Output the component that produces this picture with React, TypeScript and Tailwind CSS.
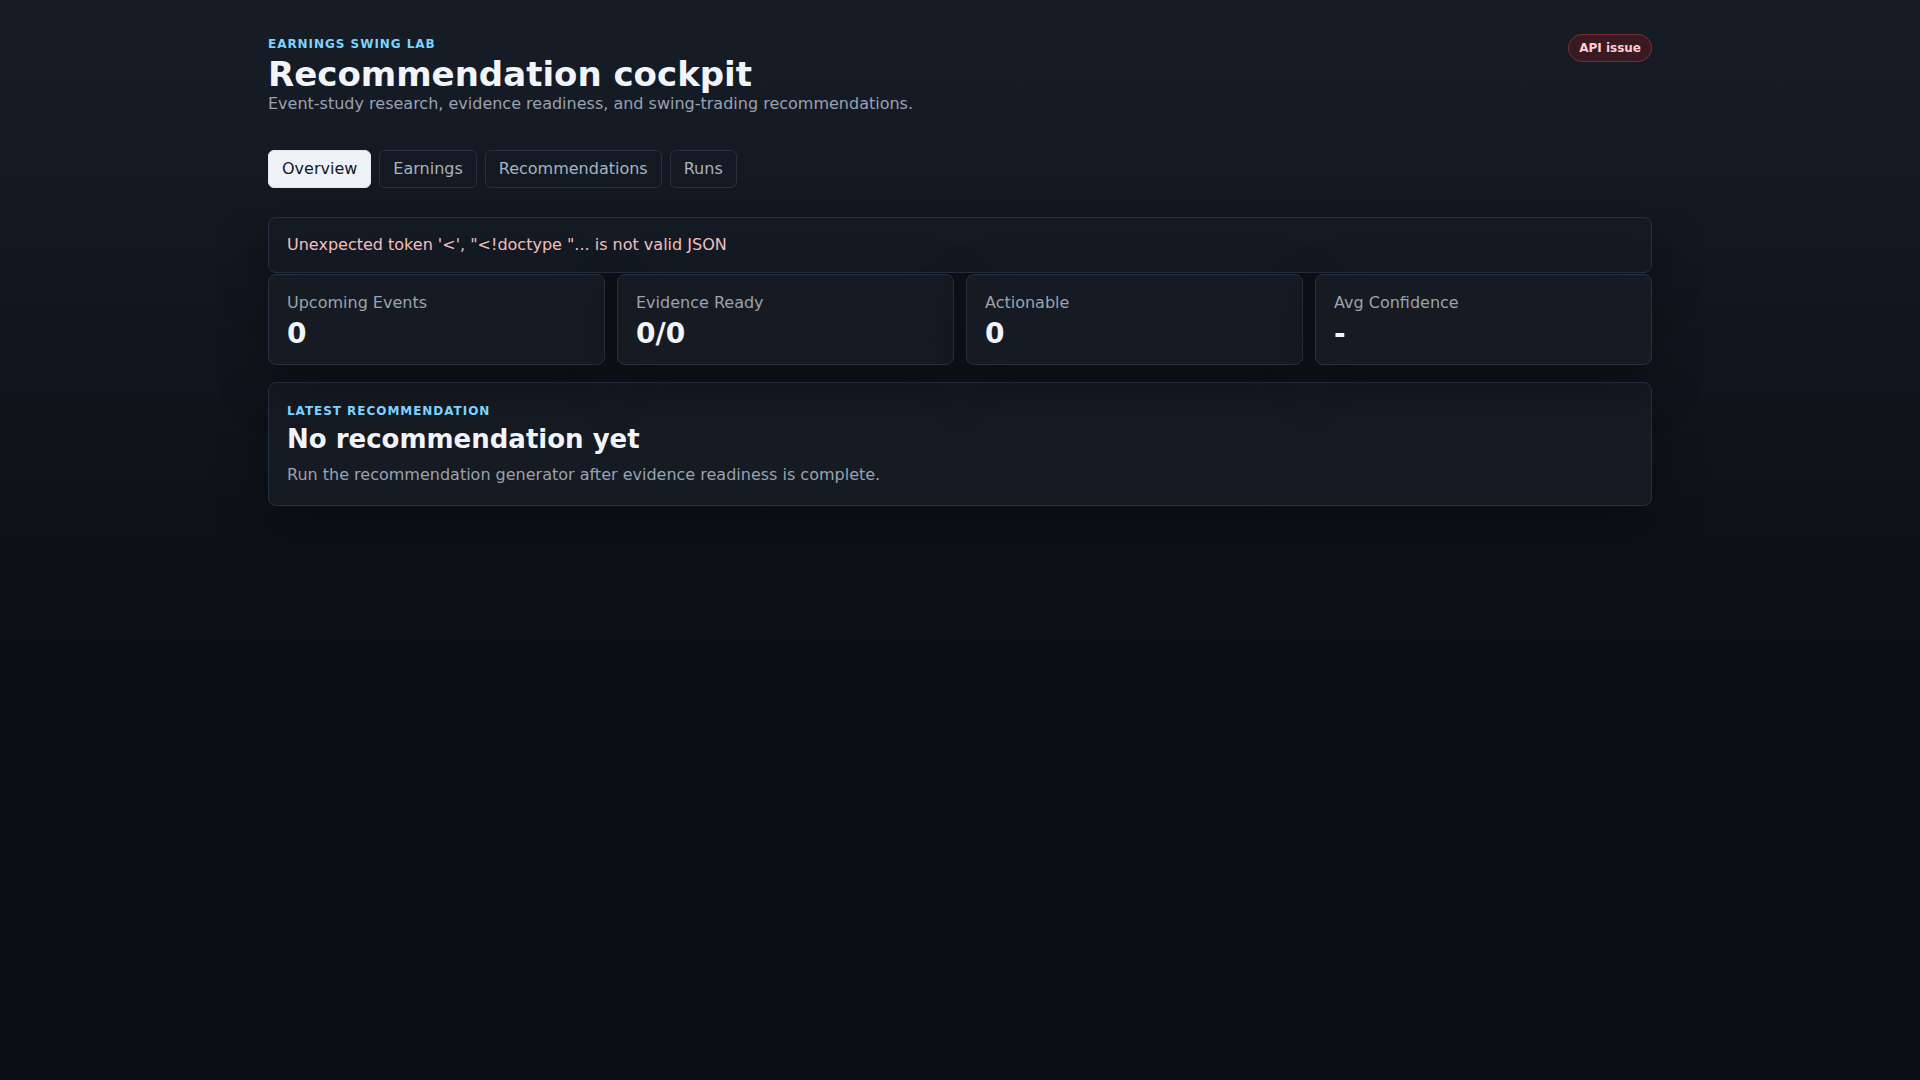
import React from "react";

const tabs = ["Overview", "Earnings", "Recommendations", "Runs"];

const stats = [
  { label: "Upcoming Events", value: "0" },
  { label: "Evidence Ready", value: "0/0" },
  { label: "Actionable", value: "0" },
  { label: "Avg Confidence", value: "-" },
];

export default function App() {
  return (
    <div className="min-h-screen bg-[linear-gradient(180deg,#171d27_0%,#11161e_30%,#0c0f14_60%,#0b0e13_100%)] font-['DejaVu_Sans','Liberation_Sans',sans-serif] text-[#e5e9f0]">
      <div className="mx-auto max-w-[1440px] px-7 pt-8 pb-10">
        <header className="flex items-start justify-between">
          <div>
            <p className="text-[12px] font-bold uppercase leading-6 tracking-[0.08em] text-[#7dd3fc]">
              Earnings Swing Lab
            </p>
            <h1 className="text-[34px] font-bold leading-[36px] text-[#f1f4f8]">
              Recommendation cockpit
            </h1>
            <p className="text-base leading-6 text-[#99a2b0]">
              Event-study research, evidence readiness, and swing-trading recommendations.
            </p>
          </div>
          <span className="mt-0.5 rounded-full border border-[#7b2d37] bg-[#3a1a21] px-2.5 py-[5px] text-xs font-bold leading-4 text-[#fecdd3]">
            API issue
          </span>
        </header>

        <nav className="mt-[34px] flex gap-2">
          {tabs.map((t, i) => (
            <button
              key={t}
              className={
                i === 0
                  ? "rounded-md border border-[#e2e8f0] bg-[#eef2f7] px-[13px] py-[6px] text-base leading-6 text-[#111827]"
                  : "rounded-md border border-[#273142] bg-[#141a23] px-[13px] py-[6px] text-base leading-6 text-[#a9b2bf]"
              }
            >
              {t}
            </button>
          ))}
        </nav>

        <div className="mt-[29px] rounded-lg border border-[#263142] bg-[#141a23] px-[18px] py-[15px] text-base leading-6 text-[#f4c0bd] shadow-[0_18px_50px_rgba(0,0,0,0.35)]">
          Unexpected token '&lt;', "&lt;!doctype "... is not valid JSON
        </div>

        <div className="mt-px grid grid-cols-4 gap-3">
          {stats.map((s) => (
            <div
              key={s.label}
              className="rounded-lg border border-[#263142] bg-[#151a23] px-[18px] pt-4 pb-[15px] shadow-[0_18px_50px_rgba(0,0,0,0.35)]"
            >
              <div className="text-base leading-6 text-[#9aa3b0]">{s.label}</div>
              <div className="mt-1 text-[28px] font-bold leading-[30px] text-[#f1f4f8]">{s.value}</div>
            </div>
          ))}
        </div>

        <section className="mt-[17px] rounded-lg border border-[#263142] bg-[#151a23] px-[18px] pt-4 pb-[18px] shadow-[0_18px_50px_rgba(0,0,0,0.35)]">
          <p className="text-[12px] font-bold uppercase leading-6 tracking-[0.08em] text-[#7dd3fc]">
            Latest recommendation
          </p>
          <h2 className="text-[26px] font-bold leading-[32px] text-[#f1f4f8]">
            No recommendation yet
          </h2>
          <p className="mt-2 text-base leading-6 text-[#99a2b0]">
            Run the recommendation generator after evidence readiness is complete.
          </p>
        </section>
      </div>
    </div>
  );
}
